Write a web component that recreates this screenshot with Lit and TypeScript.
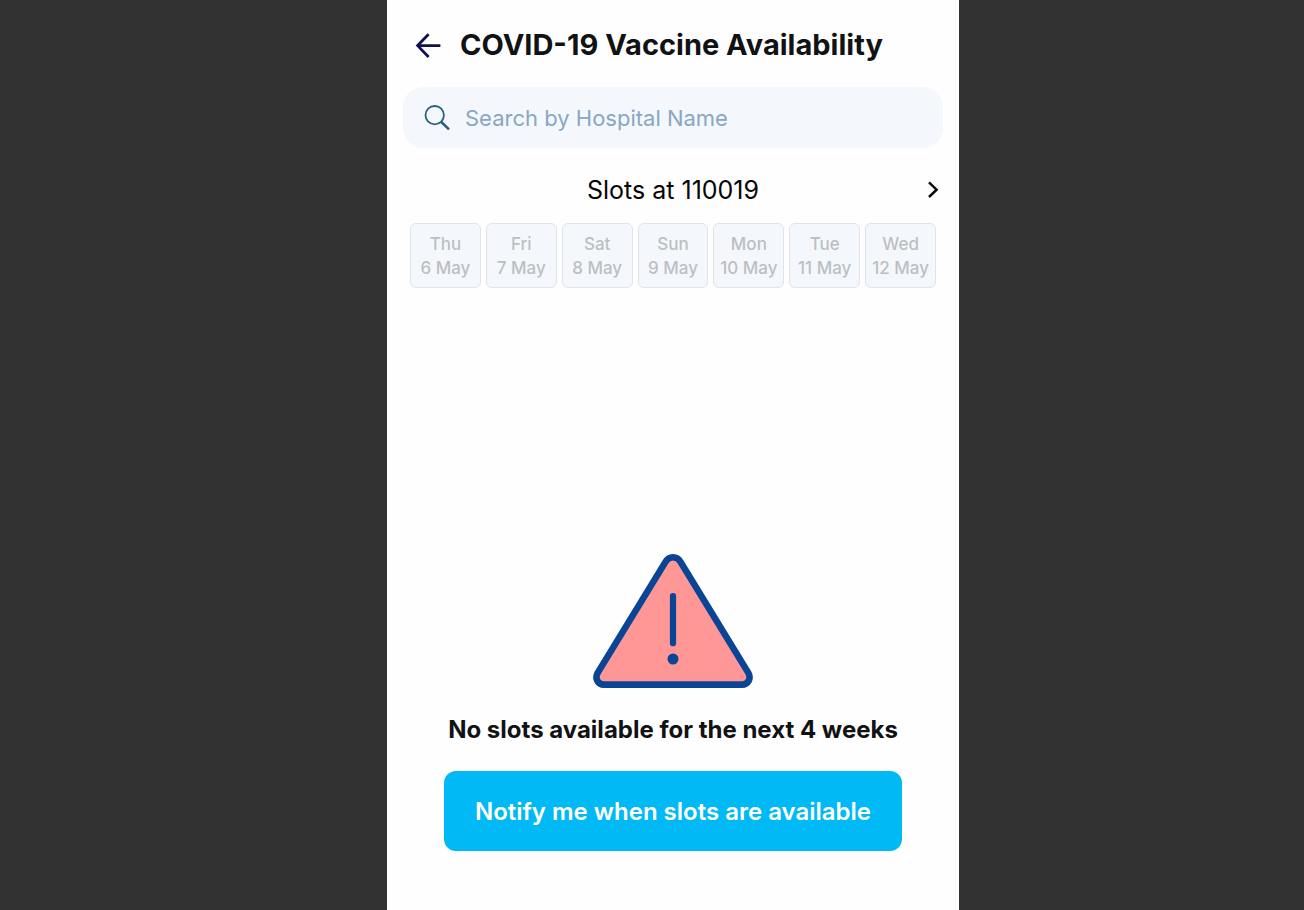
import { LitElement, html, css } from "lit";
import { customElement, property, state } from "lit/decorators.js";

interface Day {
  weekday: string;
  date: string;
}

@customElement("day-card")
class DayCard extends LitElement {
  @property() weekday = "";
  @property() date = "";

  static styles = css`
    :host {
      display: block;
    }
    .day {
      box-sizing: border-box;
      width: 100%;
      padding: 8px 0 7px;
      border: 1px solid #dfe3ea;
      border-radius: 6px;
      background: #f4f8fd;
      color: #bcbfc2;
      font: 500 17px/24px Inter, sans-serif;
      text-align: center;
      white-space: nowrap;
    }
    .line {
      display: block;
    }
  `;

  render() {
    return html`
      <button class="day" type="button" disabled>
        <span class="line">${this.weekday}</span>
        <span class="line">${this.date}</span>
      </button>
    `;
  }
}

@customElement("app-root")
class AppRoot extends LitElement {
  @state() private query = "";

  private days: Day[] = [
    { weekday: "Thu", date: "6 May" },
    { weekday: "Fri", date: "7 May" },
    { weekday: "Sat", date: "8 May" },
    { weekday: "Sun", date: "9 May" },
    { weekday: "Mon", date: "10 May" },
    { weekday: "Tue", date: "11 May" },
    { weekday: "Wed", date: "12 May" },
  ];

  static styles = css`
    :host {
      display: grid;
      grid-template-columns: minmax(0, 387fr) minmax(0, 572px) minmax(0, 345fr);
      min-height: 100vh;
      background: #323232;
      font-family: Inter, sans-serif;
    }
    * {
      box-sizing: border-box;
    }
    .screen {
      grid-column: 2;
      display: flex;
      flex-direction: column;
      padding: 24px 16px 59px;
      background: #fefefe;
    }
    svg {
      display: block;
      flex: none;
    }
    .icon-button {
      display: block;
      padding: 0;
      border: 0;
      background: none;
      cursor: pointer;
    }
    .header {
      display: flex;
      align-items: center;
      gap: 19px;
      padding: 0 12px;
    }
    .title {
      margin: 0;
      color: #111214;
      font-size: 29px;
      line-height: 42px;
      font-weight: 700;
    }
    .search {
      display: flex;
      align-items: center;
      gap: 14px;
      height: 61px;
      margin-top: 21px;
      padding: 0 20px;
      border-radius: 20px;
      background: #f4f8fd;
    }
    .field {
      flex: 1;
      min-width: 0;
      padding: 0;
      border: 0;
      outline: 0;
      background: none;
      color: #111214;
      font: 400 22px/32px Inter, sans-serif;
    }
    .field::placeholder {
      color: #89a7c3;
      opacity: 1;
    }
    .slots {
      display: grid;
      grid-template-columns: 20px 1fr 20px;
      align-items: center;
      margin-top: 26px;
    }
    .place {
      grid-column: 2;
      margin: 0;
      color: #050505;
      font-size: 25px;
      line-height: 32px;
      font-weight: 400;
      text-align: center;
    }
    .days {
      display: grid;
      grid-template-columns: repeat(7, minmax(0, 1fr));
      gap: 5px;
      margin: 17px 0 0;
      padding: 0 7px;
      list-style: none;
    }
    .empty {
      flex: 1;
      display: flex;
      flex-direction: column;
      align-items: center;
      justify-content: flex-end;
      padding: 40px 41px 0;
    }
    .message {
      margin: 26px 0 25px;
      color: #111214;
      font-size: 24px;
      line-height: 32px;
      font-weight: 700;
      text-align: center;
    }
    .notify {
      width: 100%;
      padding: 25px 12px 23px;
      border: 0;
      border-radius: 12px;
      background: #00b9f5;
      color: #fff;
      font: 600 24px/32px Inter, sans-serif;
      cursor: pointer;
    }
  `;

  private onInput(e: Event) {
    this.query = (e.target as HTMLInputElement).value;
  }

  render() {
    return html`
      <main class="screen">
        <header class="header">
          <button class="icon-button" type="button" aria-label="Back">
            <svg width="26" height="26" viewBox="0 0 26 26" fill="none" stroke="#10114e" stroke-width="2.8">
              <path d="M25.4 13.6H3M13.6 2.2L2.6 13.6L13.6 25" />
            </svg>
          </button>
          <h1 class="title">COVID-19 Vaccine Availability</h1>
        </header>

        <label class="search">
          <svg width="28" height="28" viewBox="0 0 28 28" fill="none" stroke="#2f5f7c">
            <circle cx="11.7" cy="11.2" r="9.2" stroke-width="1.8" />
            <path d="M18.3 18L26 25.4" stroke-width="2.6" />
          </svg>
          <input
            class="field"
            type="text"
            aria-label="Search by Hospital Name"
            placeholder="Search by Hospital Name"
            .value=${this.query}
            @input=${this.onInput}
          />
        </label>

        <section class="slots">
          <h2 class="place">Slots at 110019</h2>
          <button class="icon-button" type="button" aria-label="Next week">
            <svg width="20" height="20" viewBox="0 0 20 20" fill="none" stroke="#0b0b0b" stroke-width="2.5">
              <path d="M6 2.3L13.6 9.7L6 17" />
            </svg>
          </button>
        </section>

        <ul class="days">
          ${this.days.map(
            (d) => html`<li><day-card weekday=${d.weekday} date=${d.date}></day-card></li>`
          )}
        </ul>

        <section class="empty">
          <svg width="160" height="134" viewBox="0 0 160 134" aria-hidden="true">
            <path
              d="M72.5 7.9C74.2 5 77 3.3 80 3.3S85.8 5 87.5 7.9L155.2 118.6C158.6 124.6 155 130.6 149 130.6H11C5 130.6 1.4 124.6 4.8 118.6Z"
              fill="#ff9797"
              stroke="#0a4595"
              stroke-width="6.6"
              stroke-linejoin="round"
            />
            <path d="M80 42.2V89.2" stroke="#0a4595" stroke-width="6.2" stroke-linecap="round" />
            <circle cx="80" cy="105" r="5.5" fill="#0a4595" />
          </svg>
          <p class="message">No slots available for the next 4 weeks</p>
          <button class="notify" type="button">Notify me when slots are available</button>
        </section>
      </main>
    `;
  }
}
